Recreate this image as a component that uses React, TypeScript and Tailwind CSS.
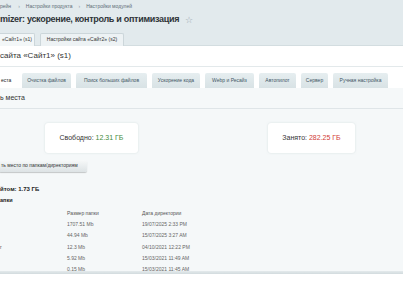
import React from "react";

const rows = [
  { name: "", size: "1707.51 Mb", date: "19/07/2025 2:33 PM" },
  { name: "", size: "44.94 Mb", date: "15/07/2025 3:27 AM" },
  { name: "r", size: "12.3 Mb", date: "04/10/2021 12:22 PM" },
  { name: "", size: "5.92 Mb", date: "15/03/2021 11:49 AM" },
  { name: "", size: "0.15 Mb", date: "15/03/2021 11:45 AM" },
];

const innerTabs = [
  { label: "Очистка файлов", w: "w-[49px]" },
  { label: "Поиск больших файлов", w: "w-[71px]" },
  { label: "Ускорение кода", w: "w-[48px]" },
  { label: "Webp и Ресайз", w: "w-[49px]" },
  { label: "Автопилот", w: "w-[37px]" },
  { label: "Сервер", w: "w-[27px]" },
  { label: "Ручная настройка", w: "w-[55px]" },
];

export default function App() {
  return (
    <div className="relative w-[403px] h-[294px] overflow-hidden bg-white font-['Liberation_Sans',Arial,sans-serif] text-[#333]">
      {/* header */}
      <div className="h-[46px] bg-[#e2eaed] border-b border-[#d3dde0]">
        <div className="flex items-center h-[12px] pt-[2px] text-[5px] text-[#5e6e78] whitespace-nowrap">
          <span>рейн</span>
          <span className="ml-[7px] text-[#8a99a2]">›</span>
          <span className="ml-[6px]">Настройки продукта</span>
          <span className="ml-[6px] text-[#8a99a2]">›</span>
          <span className="ml-[6px]">Настройки модулей</span>
        </div>
        <div className="flex items-center h-[16px] whitespace-nowrap">
          <span className="text-[9px] font-bold text-[#2f3438] tracking-[-0.3px]">
            mizer: ускорение, контроль и оптимизация
          </span>
          <span className="ml-[6px] mt-[1px] text-[9px] text-[#9aa7ae]">☆</span>
        </div>
        <div className="flex items-end h-[17px] mt-[1px]">
          <div className="h-[13px] w-[35px] flex items-center justify-center bg-[#f3f7f8] border border-l-0 border-b-0 border-[#ccd6da] rounded-tr-[2px] text-[5px] text-[#333] whitespace-nowrap">
            «Сайт1» (s1)
          </div>
          <div className="ml-[5px] h-[13px] w-[84px] flex items-center justify-center bg-[#edf2f4] border border-b-0 border-[#ccd6da] rounded-t-[2px] text-[5px] text-[#333] whitespace-nowrap">
            Настройки сайта «Сайт2» (s2)
          </div>
        </div>
      </div>

      {/* white panel */}
      <div className="bg-white">
        <div className="h-[21px] flex items-center border-b border-[#e3e9eb] text-[8px] text-[#333] whitespace-nowrap">
          сайта «Сайт1» (s1)
        </div>
        <div className="flex items-end h-[21px] gap-[5px] pt-[6px]">
          <div className="h-[15px] w-[17px] flex items-center pl-[1px] bg-white text-[5px] text-[#222] whitespace-nowrap">
            еста
          </div>
          {innerTabs.map((t) => (
            <div
              key={t.label}
              className={`${t.w} h-[15px] flex items-center justify-center rounded-t-[2px] bg-gradient-to-b from-[#e6eef0] to-[#d8e2e5] text-[5px] text-[#3f5564] whitespace-nowrap`}
            >
              {t.label}
            </div>
          ))}
        </div>
      </div>

      {/* content */}
      <div className="bg-[#f5f8f9] h-[184px] relative">
        <div className="h-[21px] flex items-center border-b border-[#dfe5e8] text-[7px] text-[#333] whitespace-nowrap">
          ь места
        </div>
        <div className="flex mt-[14px] h-[30px]">
          <div className="ml-[45px] w-[93px] h-[30px] bg-white rounded-[3px] shadow-[0_0_2px_rgba(180,195,200,0.5)] flex items-center justify-center text-[7px] whitespace-nowrap">
            <span className="text-[#333]">Свободно:&nbsp;</span>
            <span className="text-[#3f8b3a]">12.31 ГБ</span>
          </div>
          <div className="ml-[130px] w-[87px] h-[30px] bg-white rounded-[3px] shadow-[0_0_2px_rgba(180,195,200,0.5)] flex items-center justify-center text-[7px] whitespace-nowrap">
            <span className="text-[#333]">Занято:&nbsp;</span>
            <span className="text-[#d23c36]">282.25 ГБ</span>
          </div>
        </div>
        <div className="mt-[7px] w-[87px] h-[12px] flex items-center pl-[1px] rounded-r-[2px] bg-gradient-to-b from-[#f7f9f9] to-[#dde3e5] shadow-[0_1px_1px_rgba(0,0,0,0.2)] text-[5px] text-[#333] whitespace-nowrap">
          ть место по папкам/директориям
        </div>
        <div className="mt-[12px] text-[6px] font-bold text-[#222] whitespace-nowrap h-[10px] flex items-center">
          йтом: 1.73 ГБ
        </div>
        <div className="mt-[2px] text-[5.5px] font-bold text-[#222] whitespace-nowrap h-[9px] flex items-center">
          апки
        </div>
        <div className="mt-[3px] grid grid-cols-[67px_75px_1fr] text-[5px] text-[#555] whitespace-nowrap">
          <div className="h-[11.3px] flex items-center"></div>
          <div className="h-[11.3px] flex items-center">Размер папки</div>
          <div className="h-[11.3px] flex items-center">Дата директории</div>
          {rows.map((r, i) => (
            <React.Fragment key={i}>
              <div className="h-[11.3px] flex items-center text-[#555]">{r.name}</div>
              <div className="h-[11.3px] flex items-center text-[#666]">{r.size}</div>
              <div className="h-[11.3px] flex items-center text-[#666]">{r.date}</div>
            </React.Fragment>
          ))}
        </div>
      </div>
      <div className="absolute left-0 right-0 top-[271px] h-[3px] bg-gradient-to-b from-[#e4eaec] to-[#d2dbde]" />
    </div>
  );
}
